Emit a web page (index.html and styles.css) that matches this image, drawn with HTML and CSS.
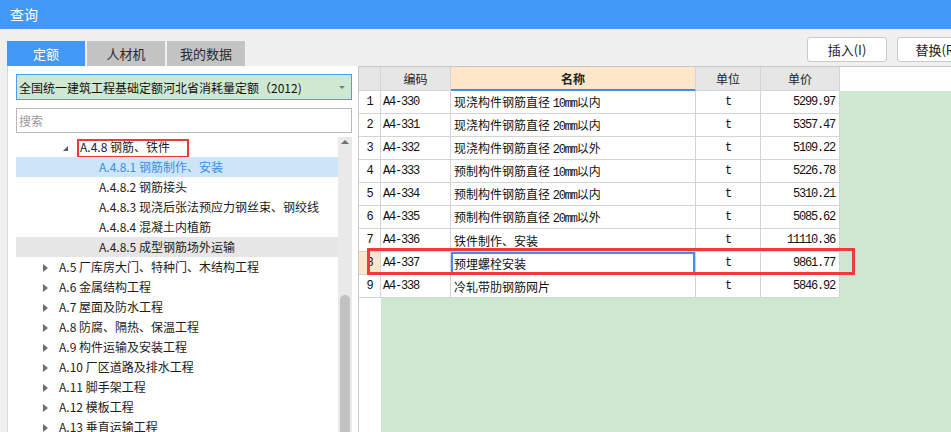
FILE: index.html
```html
<!DOCTYPE html>
<html lang="zh">
<head>
<meta charset="utf-8">
<title>查询</title>
<link rel="stylesheet" href="styles.css">
</head>
<body>
<header class="titlebar">查询</header>
<div class="main">
  <section class="left">
    <nav class="tabs">
      <div class="tab active">定额</div>
      <div class="tab">人材机</div>
      <div class="tab">我的数据</div>
    </nav>
    <div class="panel">
      <div class="select"><span>全国统一建筑工程基础定额河北省消耗量定额（2012)</span><i class="caret"></i></div>
      <div class="search">搜索</div>
      <div class="tree-wrap">
        <ul class="tree">
          <li class="node l2"><i class="arrow open"></i>A.4.8 钢筋、铁件<span class="mark"></span></li>
          <li class="node l3 selected">A.4.8.1 钢筋制作、安装</li>
          <li class="node l3">A.4.8.2 钢筋接头</li>
          <li class="node l3">A.4.8.3 现浇后张法预应力钢丝束、钢绞线</li>
          <li class="node l3">A.4.8.4 混凝土内植筋</li>
          <li class="node l3 hover">A.4.8.5 成型钢筋场外运输</li>
          <li class="node l1"><i class="arrow"></i>A.5 厂库房大门、特种门、木结构工程</li>
          <li class="node l1"><i class="arrow"></i>A.6 金属结构工程</li>
          <li class="node l1"><i class="arrow"></i>A.7 屋面及防水工程</li>
          <li class="node l1"><i class="arrow"></i>A.8 防腐、隔热、保温工程</li>
          <li class="node l1"><i class="arrow"></i>A.9 构件运输及安装工程</li>
          <li class="node l1"><i class="arrow"></i>A.10 厂区道路及排水工程</li>
          <li class="node l1"><i class="arrow"></i>A.11 脚手架工程</li>
          <li class="node l1"><i class="arrow"></i>A.12 模板工程</li>
          <li class="node l1"><i class="arrow"></i>A.13 垂直运输工程</li>
        </ul>
        <div class="scrollbar"><i class="up"></i><div class="thumb"></div></div>
      </div>
    </div>
  </section>
  <section class="right">
    <div class="toolbar">
      <button class="btn">插入(I)</button>
      <button class="btn">替换(R)</button>
    </div>
    <div class="grid">
      <table class="table">
        <colgroup><col class="c-num"><col class="c-code"><col class="c-name"><col class="c-unit"><col class="c-price"></colgroup>
        <thead>
          <tr><th></th><th>编码</th><th class="th-name">名称</th><th>单位</th><th>单价</th></tr>
        </thead>
        <tbody>
          <tr><td class="num mono">1</td><td class="code mono">A4-330</td><td class="name">现浇构件钢筋直径 <span class="mono">10mm</span>以内</td><td class="unit mono">t</td><td class="price mono">5299.97</td></tr>
          <tr><td class="num mono">2</td><td class="code mono">A4-331</td><td class="name">现浇构件钢筋直径 <span class="mono">20mm</span>以内</td><td class="unit mono">t</td><td class="price mono">5357.47</td></tr>
          <tr><td class="num mono">3</td><td class="code mono">A4-332</td><td class="name">现浇构件钢筋直径 <span class="mono">20mm</span>以外</td><td class="unit mono">t</td><td class="price mono">5109.22</td></tr>
          <tr><td class="num mono">4</td><td class="code mono">A4-333</td><td class="name">预制构件钢筋直径 <span class="mono">10mm</span>以内</td><td class="unit mono">t</td><td class="price mono">5226.78</td></tr>
          <tr><td class="num mono">5</td><td class="code mono">A4-334</td><td class="name">预制构件钢筋直径 <span class="mono">20mm</span>以内</td><td class="unit mono">t</td><td class="price mono">5310.21</td></tr>
          <tr><td class="num mono">6</td><td class="code mono">A4-335</td><td class="name">预制构件钢筋直径 <span class="mono">20mm</span>以外</td><td class="unit mono">t</td><td class="price mono">5085.62</td></tr>
          <tr><td class="num mono">7</td><td class="code mono">A4-336</td><td class="name">铁件制作、安装</td><td class="unit mono">t</td><td class="price mono">11110.36</td></tr>
          <tr class="sel"><td class="num mono">8</td><td class="code mono">A4-337</td><td class="name">预埋螺栓安装</td><td class="unit mono">t</td><td class="price mono">9861.77</td></tr>
          <tr><td class="num mono">9</td><td class="code mono">A4-338</td><td class="name">冷轧带肋钢筋网片</td><td class="unit mono">t</td><td class="price mono">5846.92</td></tr>
        </tbody>
      </table>
      <div class="annot"></div>
    </div>
  </section>
</div>
</body>
</html>
```
FILE: styles.css
```css
* { box-sizing: border-box; margin: 0; padding: 0; }
html, body { width: 951px; height: 432px; overflow: hidden; }
body {
  background: #f0f0f0;
  font-family: "Noto Sans CJK SC", "Noto Sans", sans-serif;
  font-size: 12px;
  color: #1c1c1c;
}
.titlebar {
  height: 29px;
  background: #4298f5;
  color: #fff;
  font-size: 14px;
  line-height: 29px;
  padding-left: 10px;
}
.main {
  display: grid;
  grid-template-columns: 358px 1fr;
  height: 403px;
}
.left {
  display: flex;
  flex-direction: column;
  padding: 12px 0 0 7px;
  min-height: 0;
}
.tabs { display: flex; gap: 2px; height: 25px; flex: none; }
.tab {
  width: 78px;
  background: #c3c3c3;
  color: #2a2a2a;
  font-size: 13px;
  text-align: center;
  line-height: 25px;
}
.tab.active { background: #4298f5; color: #fff; }
.panel {
  flex: 1;
  background: #fff;
  border-left: 1px solid #d8d8d8;
  padding: 8px 6px 0 8px;
  display: flex;
  flex-direction: column;
  min-height: 0;
  overflow: hidden;
}
.select {
  flex: none;
  height: 26px;
  background: #cfe8d2;
  border: 1px solid #4a9ff5;
  display: flex;
  align-items: center;
  justify-content: space-between;
  padding: 0 6px 0 2px;
  color: #111;
}
.caret {
  width: 0; height: 0;
  border-top: 3px solid #7a7a7a;
  border-left: 3px solid transparent;
  border-right: 3px solid transparent;
}
.search {
  flex: none;
  margin-top: 8px;
  height: 25px;
  border: 1px solid #b9b9b9;
  color: #9a9a9a;
  line-height: 23px;
  padding-left: 2px;
}
.tree-wrap {
  margin-top: 4px;
  flex: 1;
  display: flex;
  min-height: 0;
  overflow: hidden;
}
.tree { flex: 1; list-style: none; }
.node {
  position: relative;
  height: 20px;
  line-height: 20px;
  white-space: nowrap;
  color: #1c1c1c;
}
.node.l1 { padding-left: 27px; }
.node.l2 { padding-left: 47px; }
.node.l3 { padding-left: 83px; }
.node.selected { background: #cce5f8; color: #3b8de6; }
.node.hover { background: #e6e6e6; }
.arrow {
  display: inline-block;
  width: 0; height: 0;
  vertical-align: middle;
  border-left: 5px solid #6e6e6e;
  border-top: 4px solid transparent;
  border-bottom: 4px solid transparent;
  margin-right: 11px;
  position: relative;
  top: -1px;
}
.arrow.open {
  border-left: 5px solid transparent;
  border-bottom: 5px solid #5a5a5a;
  border-top: 0;
  margin-right: 12px;
  top: 0;
}
.mark {
  position: absolute;
  left: 61px;
  top: 2px;
  width: 112px;
  height: 19px;
  border: 2px solid #ea3a3a;
}
.scrollbar {
  flex: none;
  width: 14px;
  background: #e9e9e9;
  display: flex;
  flex-direction: column;
  align-items: center;
}
.up {
  width: 0; height: 0;
  margin-top: 3px;
  border-bottom: 4px solid #707070;
  border-left: 4px solid transparent;
  border-right: 4px solid transparent;
}
.thumb {
  margin-top: 151px;
  width: 10px;
  flex: 1;
  background: #c2c2c2;
  border-radius: 5px 5px 0 0;
}
.right {
  display: flex;
  flex-direction: column;
  min-width: 0;
  min-height: 0;
}
.toolbar {
  flex: none;
  height: 37px;
  display: flex;
  gap: 10px;
  padding: 8px 0 0 449px;
  overflow: hidden;
}
.btn {
  flex: none;
  width: 80px;
  height: 25px;
  background: #fff;
  border: 1px solid #c9c9c9;
  border-radius: 3px;
  font-family: "Noto Sans CJK SC", "Noto Sans", sans-serif;
  font-size: 13px;
  color: #222;
  white-space: nowrap;
}
.grid {
  flex: 1;
  position: relative;
  overflow: hidden;
  border-top: 1px solid #c6c6c6;
  border-left: 1px solid #c6c6c6;
  background:
    linear-gradient(#fff, #fff) 0 0 / 100% 24px no-repeat,
    linear-gradient(#fff, #fff) 0 0 / 22px 100% no-repeat,
    #cde7d0;
}
.table {
  table-layout: fixed;
  border-collapse: separate;
  border-spacing: 0;
  width: 481px;
}
.c-num { width: 22px; }
.c-code { width: 70px; }
.c-name { width: 245px; }
.c-unit { width: 65px; }
.c-price { width: 79px; }
.table th, .table td {
  border-right: 1px solid #d4d4d4;
  border-bottom: 1px solid #d4d4d4;
  white-space: nowrap;
  overflow: hidden;
  background: #fff;
}
.table thead tr { height: 24px; }
.table tbody tr { height: 23px; }
.table th {
  background: #e6e6e6;
  font-weight: normal;
  font-size: 12px;
  color: #222;
  text-align: center;
}
.table th.th-name {
  background: #fde6c9;
  font-weight: bold;
  border-bottom-color: #3d8ef0;
  box-shadow: inset 0 -1px 0 #3d8ef0;
}
.mono {
  font-family: "Liberation Mono", "DejaVu Sans Mono", monospace;
  font-size: 12px;
  letter-spacing: -1.2px;
  color: #111;
}
.num { text-align: center; }
.code { padding-left: 2px; }
.name { padding-left: 3px; color: #111; }
.unit { text-align: center; }
.price { text-align: right; padding-right: 4px; }
.sel .num { background: #fde6c9; }
.sel .name { box-shadow: inset 0 0 0 2px #3d8ef0; }
.annot {
  position: absolute;
  left: 8px;
  top: 181px;
  width: 488px;
  height: 27px;
  border: 3px solid #ee3b3b;
}
```
